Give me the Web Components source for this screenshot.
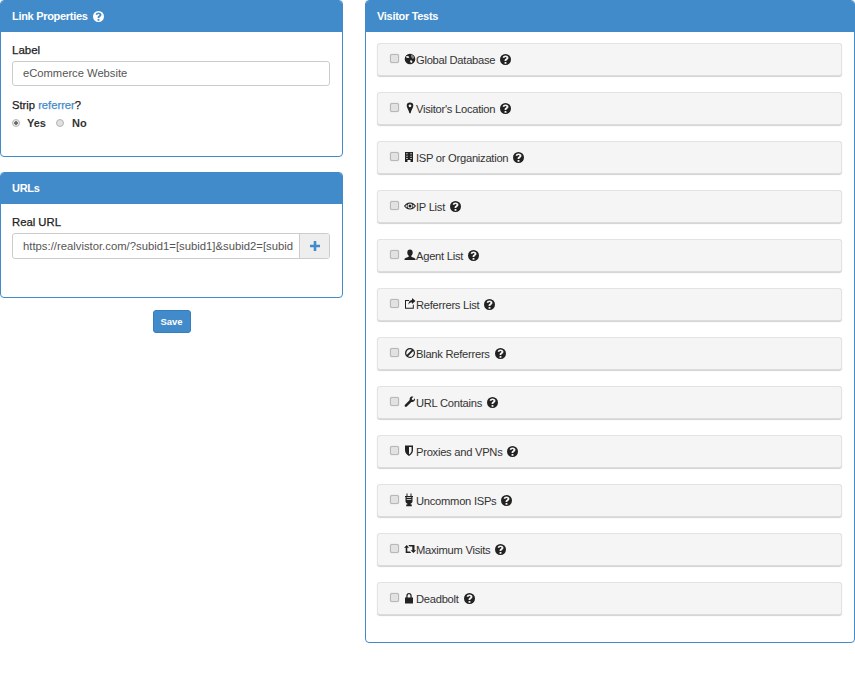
<!DOCTYPE html>
<html><head><meta charset="utf-8"><title>Link</title>
<style>
html,body{margin:0;padding:0;background:#fff}
body{font:12px/17px "Liberation Sans",Arial,sans-serif;color:#333;width:855px;height:682px;overflow:hidden}
</style></head><body>
<app-page></app-page>
<template id="ic-help"><svg viewBox="0 0 24 24" width="11" height="11"><path fill="currentColor" fill-rule="evenodd" d="M12 0a12 12 0 1 0 0 24 12 12 0 0 0 0-24zm-2 17.5h4v4h-4zM12 3c-3.4 0-5.7 1.7-6.3 4.7l3.5 1c.3-1.5 1.2-2.4 2.7-2.4 1.400 0 2.300.7 2.300 1.800 0 1-.7 1.500-1.800 2.300-1.500 1-2.400 2.100-2.400 4.100v1h4v-.6c0-1 .5-1.500 1.500-2.200 1.700-1.200 2.900-2.400 2.900-4.600C18.400 5 15.800 3 12 3z"/></svg></template>
<script>
const ICONS={
globe:'<path fill-rule="evenodd" d="M6 .7a5.300 5.300 0 1 0 0 10.600A5.300 5.300 0 0 0 6 .7zM2.800 3l1.700.3.8 1-1 .7-1.500-.3-1-.6c.2-.4.6-.8 1-1.100zm3.700 4 1.600.8.300 1.200-1.300 1.200-.9-1.400z"/><path fill="#888" d="M7 1.500l2.500 1.200.8 2-1.500 1.200-1.600-2z"/>',
pin:'<path fill-rule="evenodd" d="M6 .5a3.300 3.300 0 0 0-3.300 3.300c0 2 2.100 4 2.700 7.500h1.200C7.200 7.800 9.300 5.800 9.300 3.800A3.300 3.300 0 0 0 6 .5zm0 1.900a1.400 1.400 0 1 1 0 2.800 1.400 1.400 0 0 1 0-2.800z"/>',
building:'<path transform="translate(-1 0)" fill-rule="evenodd" d="M2 1h8v10H7.500V9h-3v2H2zM3.300 2.300v1h1.300v-1zm4.100 0v1h1.300v-1zM3.300 4.800v1h1.300v-1zm4.100 0v1h1.300v-1zM3.300 7v.9h1.300V7zm4.100 0v.9h1.300V7z"/>',
eye:'<path fill-rule="evenodd" d="M6 2.500C3.300 2.500 1.200 4.200 0 6c1.200 1.800 3.300 3.500 6 3.500S10.800 7.800 12 6C10.800 4.200 8.700 2.500 6 2.500zm0 1a2.500 2.500 0 1 1 0 5 2.500 2.500 0 0 1 0-5zM1.300 6c.5-.7 1.100-1.200 1.800-1.600a3.500 3.500 0 0 0 0 3.200C2.400 7.200 1.800 6.700 1.300 6zm9.400 0c-.5.700-1.100 1.200-1.800 1.600a3.500 3.500 0 0 0 0-3.200c.7.400 1.300.9 1.800 1.600zM6 4.500a1.500 1.500 0 1 0 0 3 1.500 1.500 0 0 0 0-3z"/>',
user:'<path d="M6 .5c-1.700 0-2.700 1.300-2.700 3 0 1.400.6 2.600 1.400 3.200v1.100C3.500 8.600.5 9 .5 10.300v.7h11v-.7c0-1.300-3-1.700-4.200-2.500V6.700c.8-.6 1.400-1.800 1.400-3.200 0-1.700-1-3-2.700-3z"/>',
share:'<path fill-rule="evenodd" d="M8 0l3.500 3L8 6V4.400C6.200 4.400 5 5 4.300 6.700 4.300 4.300 5.800 2.200 8 1.900zM1 2h4.200v1H2v6.800h6.800V7.200l1-.9V10.800H1z"/>',
ban:'<path fill-rule="evenodd" d="M6 1a5 5 0 1 0 0 10 5 5 0 0 0 0-10zm0 1.300c.7 0 1.300.2 1.900.5L2.800 7.900A3.700 3.700 0 0 1 6 2.300zm3.200 1.800A3.700 3.700 0 0 1 4.100 9.200z"/>',
wrench:'<path d="M11 2.300 9.300 4 8 3.700 7.700 2.400 9.400.7C8 .2 6.700.6 6 1.700c-.4.700-.5 1.500-.3 2.200L1 8.800c-.5.500-.5 1.300 0 1.800s1.300.5 1.800 0l4.600-4.700c.8.300 1.600.2 2.300-.3 1.100-.7 1.600-2.200 1.300-3.300z"/>',
shield:'<path transform="translate(-1 0)" fill-rule="evenodd" d="M2 .5h8v5c0 2.500-2.200 4.400-4 5.500-1.800-1.100-4-3-4-5.500zM6 2v7.400C7.300 8.500 8.600 7.100 8.600 5.500V2z"/>',
plug:'<path transform="translate(-1 0)" fill-rule="evenodd" d="M3.500-.5h1V2h3V-.5h1V2h1.500v1H9.500v4.300c0 1.100-.8 2-1.800 2.300v.9h1.100v1.800H3.200V10.500h1.100v-.9C3.300 9.300 2.500 8.400 2.500 7.300V3H2V2h1.500zM3.700 3.200v.9h4.600v-.9zm0 2v.9h4.600v-.9z"/>',
retweet:'<path d="M2.800 2 0 4.800h1.700V10h5.500L5.900 8.600H3.300V4.800H5zM4.300 2l1.300 1.400h2.700v3.800H6.600L9.400 10l2.800-2.800h-1.700V2z"/>',
lock:'<path transform="translate(-1 0)" fill-rule="evenodd" d="M6 1C4.400 1 3.300 2.200 3.300 3.900V5.500H2v6h8v-6H8.700V3.900C8.700 2.200 7.600 1 6 1zm0 1.200c.9 0 1.400.7 1.400 1.700v1.600H4.600V3.900c0-1 .5-1.700 1.400-1.700z"/>'
};
const help=()=>document.getElementById('ic-help').innerHTML;

class HelpIcon extends HTMLElement{constructor(){super();this.attachShadow({mode:'open'}).innerHTML=`<style>:host{display:inline-flex;width:11px;height:11px}svg{display:block}</style>${help()}`}}
customElements.define('help-icon',HelpIcon);

class TestIcon extends HTMLElement{constructor(){super();this.attachShadow({mode:'open'}).innerHTML=`<style>:host{display:inline-flex;width:12px;height:12px;color:#222}svg{display:block;fill:currentColor;overflow:visible}</style><svg viewBox="0 0 12 12" width="12" height="12">${ICONS[this.getAttribute('name')]}</svg>`}}
customElements.define('test-icon',TestIcon);

class UiPanel extends HTMLElement{constructor(){super();this.attachShadow({mode:'open'}).innerHTML=`<style>
:host{display:block;box-sizing:border-box;border:1px solid #428bca;border-radius:4px;background:#fff;overflow:hidden}
.h{height:32px;margin:-1px -1px 0;padding:0 12px;background:#428bca;color:#fff;font-weight:bold;font-size:11px;letter-spacing:-.3px;display:flex;align-items:center;gap:5px}
</style><div class="h"><slot name="title"></slot></div><slot></slot>`}}
customElements.define('ui-panel',UiPanel);

class TestRow extends HTMLElement{constructor(){super();this.attachShadow({mode:'open'}).innerHTML=`<style>
:host{display:flex;box-sizing:border-box;height:33px;border:1px solid #e3e3e3;border-bottom-color:#dcdcdc;border-radius:3px;background:#f5f5f5;box-shadow:0 1px 1px 0 rgba(0,0,0,.18);padding:0 0 0 12px;align-items:center;color:#333;font-size:11.200px;letter-spacing:-.27px}
.c{box-sizing:border-box;width:9px;height:9px;border:1px solid #b8b8b8;border-radius:2px;background:#e2e2e2;box-shadow:0 0 1px #aaa;margin:-3px 0 0 0;flex:none}
.i{margin:-2px 0 0 5px;display:flex;width:12px;justify-content:center;flex:none}
.t{white-space:nowrap;margin-top:1px}
.q{margin:0 0 0 5px;color:#222;display:flex;width:11px}
</style><span class="c"></span><span class="i"><test-icon name="${this.getAttribute('icon')}"></test-icon></span><span class="t"><slot></slot></span><span class="q"><help-icon></help-icon></span>`}}
customElements.define('test-row',TestRow);

class LinkProps extends HTMLElement{constructor(){super();this.attachShadow({mode:'open'}).innerHTML=`<style>
:host{display:block;height:157px}
ui-panel{height:157px}
.b{padding:10px 12px 0 11px}
.l{display:block;height:16px;line-height:16px;color:#222;font-size:11.500px;-webkit-text-stroke:.25px #222}
.f{box-sizing:border-box;height:25px;margin-top:3px;border:1px solid #ccc;border-radius:3px;padding:0 10px;line-height:23px;color:#555;white-space:nowrap;font-size:11.200px}
.s{margin-top:11px;color:#222;height:16px;line-height:16px;font-size:11.200px;-webkit-text-stroke:.25px}
.s a{color:#428bca;text-decoration:none}
.r{display:flex;align-items:center;margin-top:2px;font-weight:bold;height:16px;font-size:11px}
.d{box-sizing:border-box;width:8px;height:8px;border-radius:50%;border:1px solid #b5b5b5;background:#e0e0e0;flex:none}
.d.on{background:radial-gradient(circle,#666 0 1.500px,#e8e8e8 2px)}
</style><ui-panel><span slot="title">Link Properties</span><help-icon slot="title" style="color:#fff"></help-icon>
<div class="b"><span class="l">Label</span><div class="f">eCommerce Website</div>
<div class="s">Strip <a>referrer</a>?</div>
<div class="r"><span class="d on"></span><span style="margin-left:7px">Yes</span><span class="d" style="margin-left:10px"></span><span style="margin-left:8px">No</span></div>
</div></ui-panel>`}}
customElements.define('link-props',LinkProps);

class UrlPanel extends HTMLElement{constructor(){super();this.attachShadow({mode:'open'}).innerHTML=`<style>
:host{display:block;height:126px;margin-top:15px}
ui-panel{height:126px}
.b{padding:10px 12px 0 11px}
.l{display:block;height:16px;line-height:16px;color:#222;font-size:11.300px;-webkit-text-stroke:.25px #222}
.g{display:flex;box-sizing:border-box;height:26px;margin-top:3px;border:1px solid #ccc;border-radius:3px;overflow:hidden}
.f{flex:1;min-width:0;padding:0 6px 0 10px;line-height:24px;color:#555;white-space:nowrap;overflow:hidden;font-size:11.300px}
.a{width:29px;flex:none;border-left:1px solid #ccc;background:#eee;display:flex;align-items:center;justify-content:center}
</style><ui-panel><span slot="title">URLs</span>
<div class="b"><span class="l">Real URL</span><div class="g"><div class="f">https://realvistor.com/?subid1=[subid1]&amp;subid2=[subid</div><div class="a"><svg viewBox="0 0 10 10" width="10" height="10"><path fill="#428bca" d="M3.700 0h2.600v3.700H10v2.600H6.300V10H3.700V6.300H0V3.700h3.700z"/></svg></div></div></div></ui-panel>`}}
customElements.define('url-panel',UrlPanel);

class SaveBar extends HTMLElement{constructor(){super();this.attachShadow({mode:'open'}).innerHTML=`<style>
:host{display:flex;justify-content:center;margin-top:12px}
.b{box-sizing:border-box;width:38px;height:23px;background:#428bca;border:1px solid #357ebd;border-radius:3px;color:#fff;font-weight:bold;font-size:9.500px;line-height:21px;text-align:center}
</style><div class="b">Save</div>`}}
customElements.define('save-bar',SaveBar);

class VisitorTests extends HTMLElement{constructor(){super();
const rows=[['globe','Global Database'],['pin',"Visitor's Location"],['building','ISP or Organization'],['eye','IP List'],['user','Agent List'],['share','Referrers List'],['ban','Blank Referrers'],['wrench','URL Contains'],['shield','Proxies and VPNs'],['plug','Uncommon ISPs'],['retweet','Maximum Visits'],['lock','Deadbolt']];
this.attachShadow({mode:'open'}).innerHTML=`<style>
:host{display:block;width:490px;height:643px}
ui-panel{height:643px}
.b{display:flex;flex-direction:column;gap:16px;padding:11px 12px 0 11px}
</style><ui-panel><span slot="title">Visitor Tests</span><div class="b">${rows.map(r=>`<test-row icon="${r[0]}">${r[1]}</test-row>`).join('')}</div></ui-panel>`}}
customElements.define('visitor-tests',VisitorTests);

class AppPage extends HTMLElement{constructor(){super();this.attachShadow({mode:'open'}).innerHTML=`<style>
:host{display:flex;gap:22px;align-items:flex-start}
.l{width:343px;flex:none}
</style><div class="l"><link-props></link-props><url-panel></url-panel><save-bar></save-bar></div><visitor-tests></visitor-tests>`}}
customElements.define('app-page',AppPage);
</script>
</body></html>
